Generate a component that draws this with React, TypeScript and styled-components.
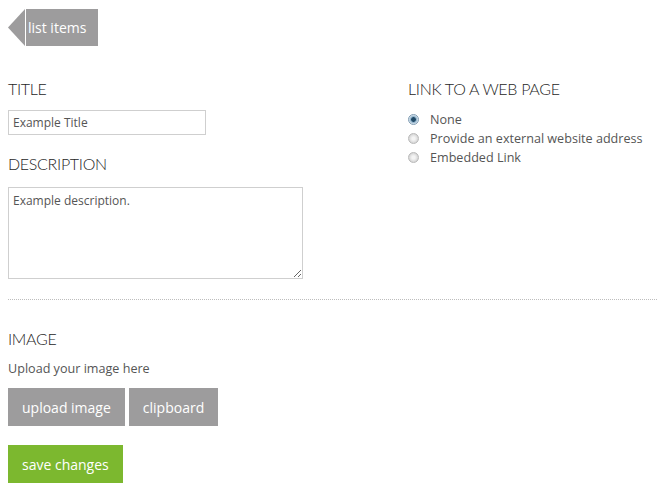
import React, { useState } from "react";
import styled, { createGlobalStyle } from "styled-components";

const GlobalStyle = createGlobalStyle`
  body {
    margin: 0;
    background: #fff;
    font-family: "Open Sans", "Liberation Sans", sans-serif;
    color: #555;
  }
`;

const linkOptions = [
  { id: "none", label: "None" },
  { id: "external", label: "Provide an external website address" },
  { id: "embedded", label: "Embedded Link" },
];

export default function App() {
  const [title, setTitle] = useState("Example Title");
  const [description, setDescription] = useState("Example description.");
  const [link, setLink] = useState("none");

  return (
    <Page>
      <GlobalStyle />
      <BackButton type="button">
        <Arrow width="17" height="37" viewBox="0 0 17 37">
          <polygon points="17,0 17,37 0,18.5" fill="#9d9c9d" />
        </Arrow>
        <BackLabel>list items</BackLabel>
      </BackButton>

      <Columns>
        <Column>
          <Heading>Title</Heading>
          <TitleInput
            type="text"
            value={title}
            onChange={({ target: { value } }) => setTitle(value)}
          />
          <Heading $top={19} $bottom={13}>Description</Heading>
          <Description
            value={description}
            onChange={({ target: { value } }) => setDescription(value)}
          />
        </Column>
        <Column>
          <Heading>Link to a web page</Heading>
          <RadioList>
            {linkOptions.map((opt) => (
              <RadioRow key={opt.id} onClick={() => setLink(opt.id)}>
                <RadioDot $checked={link === opt.id} />
                {opt.label}
              </RadioRow>
            ))}
          </RadioList>
        </Column>
      </Columns>

      <Divider />

      <Heading $top={29}>Image</Heading>
      <Hint>Upload your image here</Hint>
      <ButtonRow>
        <Button type="button">upload image</Button>
        <Button type="button">clipboard</Button>
      </ButtonRow>
      <SaveButton type="button">save changes</SaveButton>
    </Page>
  );
}

const Page = styled.div`
  padding: 9px 2px 0 8px;
  display: flex;
  flex-direction: column;
  align-items: flex-start;
`;

const BackButton = styled.button`
  display: flex;
  align-items: stretch;
  height: 37px;
  padding: 0;
  border: 0;
  background: none;
  cursor: pointer;
`;

const Arrow = styled.svg`
  display: block;
  flex: none;
`;

const BackLabel = styled.span`
  display: flex;
  align-items: center;
  margin-left: 1px;
  padding: 0 12px 0 2px;
  background: #9d9c9d;
  color: #fff;
  font-family: "Open Sans", "Liberation Sans", sans-serif;
  font-size: 14px;
`;

const Columns = styled.div`
  display: grid;
  grid-template-columns: 400px 1fr;
  align-self: stretch;
  margin-top: 33px;
`;

const Column = styled.div`
  display: flex;
  flex-direction: column;
  align-items: flex-start;
`;

const Heading = styled.h2<{ $top?: number; $bottom?: number }>`
  margin: ${(p) => p.$top ?? 0}px 0 ${(p) => p.$bottom ?? 11}px 0;
  font-family: Lato, "Liberation Sans", sans-serif;
  font-weight: 300;
  font-size: 16px;
  line-height: 20px;
  letter-spacing: -0.3px;
  text-transform: uppercase;
  color: #262626;
`;

const TitleInput = styled.input`
  box-sizing: border-box;
  width: 198px;
  height: 25px;
  padding: 0 4px;
  border: 1px solid #cfcfcf;
  font-family: "Open Sans", "Liberation Sans", sans-serif;
  font-size: 12px;
  color: #555;
  outline: none;
`;

const Description = styled.textarea`
  box-sizing: border-box;
  width: 295px;
  height: 92px;
  padding: 4px;
  border: 1px solid #cfcfcf;
  font-family: "Open Sans", "Liberation Sans", sans-serif;
  font-size: 12px;
  color: #555;
  outline: none;
`;

const RadioList = styled.div`
  display: flex;
  flex-direction: column;
`;

const RadioRow = styled.label`
  display: flex;
  align-items: center;
  height: 19px;
  font-size: 12.6px;
  color: #555;
  cursor: pointer;
`;

const RadioDot = styled.span<{ $checked: boolean }>`
  box-sizing: border-box;
  width: 11px;
  height: 11px;
  margin: 0 11px 0 0;
  border-radius: 50%;
  border: 1px solid ${(p) => (p.$checked ? "#7f9cb3" : "#b9b9b9")};
  background: ${(p) =>
    p.$checked
      ? "radial-gradient(circle, #224a66 0 2px, #7fa6c2 2.6px, #dfe9f1 4.5px)"
      : "radial-gradient(circle, #f4f4f4 0 1.5px, #d6d6d6 4.5px)"};
`;

const Divider = styled.hr`
  align-self: stretch;
  margin: 20px 0 0 0;
  border: 0;
  border-top: 1px dotted #bdbdbd;
`;

const Hint = styled.p`
  margin: 0;
  font-size: 12.6px;
  line-height: 17px;
  color: #555;
`;

const ButtonRow = styled.div`
  display: flex;
  gap: 4px;
  margin-top: 11px;
`;

const Button = styled.button<{ $green?: boolean }>`
  height: 38px;
  padding: 0 14px;
  border: 0;
  background: ${(p) => (p.$green ? "#7cb82f" : "#9d9c9d")};
  color: #fff;
  font-family: "Open Sans", "Liberation Sans", sans-serif;
  font-size: 14px;
  cursor: pointer;
`;

const SaveButton = styled(Button).attrs({ $green: true })`
  margin-top: 19px;
`;
